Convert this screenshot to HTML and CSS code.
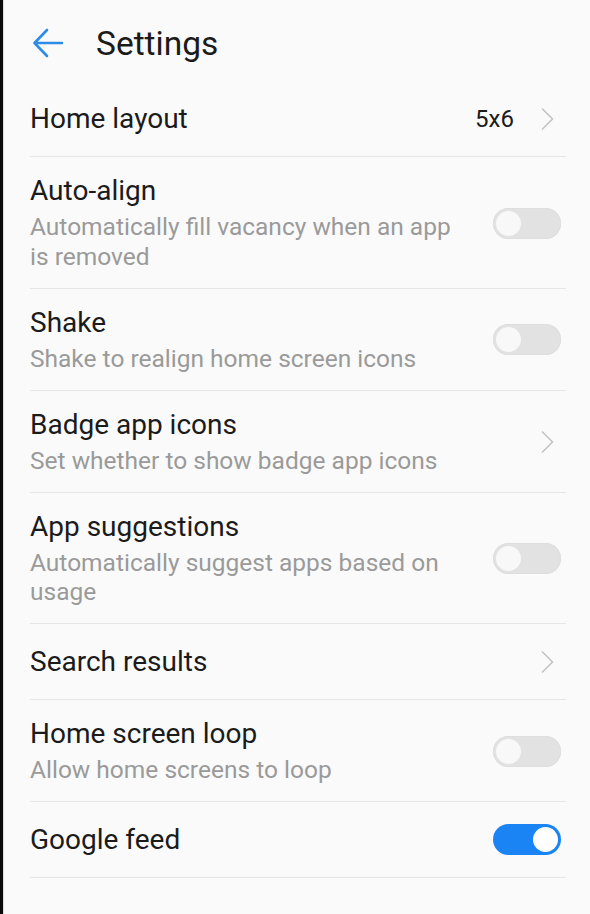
FILE: index.html
```html
<!DOCTYPE html>
<html>
<head>
<meta charset="utf-8">
<link rel="stylesheet" href="styles.css">
</head>
<body>
<div class="screen">
  <header class="header">
    <svg class="back" width="32" height="30" viewBox="0 0 32 30"><path d="M30 15H3M15 2L2.5 15L15 28" fill="none" stroke="#2d8de6" stroke-width="2.6" stroke-linecap="round" stroke-linejoin="round"/></svg>
    <h1 class="title">Settings</h1>
  </header>
  <ul class="list">
    <li class="row single">
      <div class="text"><div class="label">Home layout</div></div>
      <span class="value">5x6</span>
      <svg class="chev" width="14" height="24" viewBox="0 0 14 24"><path d="M2 1.5L12.5 12L2 22.5" fill="none" stroke="#c4c4c4" stroke-width="1.6"/></svg>
    </li>
    <li class="row">
      <div class="text"><div class="label">Auto-align</div><div class="sub">Automatically fill vacancy when an app is removed</div></div>
      <span class="toggle"></span>
    </li>
    <li class="row">
      <div class="text"><div class="label">Shake</div><div class="sub">Shake to realign home screen icons</div></div>
      <span class="toggle"></span>
    </li>
    <li class="row">
      <div class="text"><div class="label">Badge app icons</div><div class="sub">Set whether to show badge app icons</div></div>
      <svg class="chev" width="14" height="24" viewBox="0 0 14 24"><path d="M2 1.5L12.5 12L2 22.5" fill="none" stroke="#c4c4c4" stroke-width="1.6"/></svg>
    </li>
    <li class="row">
      <div class="text"><div class="label">App suggestions</div><div class="sub">Automatically suggest apps based on usage</div></div>
      <span class="toggle"></span>
    </li>
    <li class="row single">
      <div class="text"><div class="label">Search results</div></div>
      <svg class="chev" width="14" height="24" viewBox="0 0 14 24"><path d="M2 1.5L12.5 12L2 22.5" fill="none" stroke="#c4c4c4" stroke-width="1.6"/></svg>
    </li>
    <li class="row">
      <div class="text"><div class="label">Home screen loop</div><div class="sub">Allow home screens to loop</div></div>
      <span class="toggle"></span>
    </li>
    <li class="row single">
      <div class="text"><div class="label">Google feed</div></div>
      <span class="toggle on"></span>
    </li>
  </ul>
</div>
</body>
</html>
```
FILE: styles.css
```css
html, body {
  margin: 0;
  padding: 0;
  background: #fafafa;
}
body {
  font-family: Roboto, "Noto Sans", sans-serif;
  color: #1b1b1b;
}
.screen {
  box-sizing: border-box;
  width: 590px;
  height: 914px;
  border-left: 3px solid #0a0a0a;
  box-shadow: inset 1px 0 0 #dcdcdc;
  padding-left: 27px;
  padding-right: 24px;
  overflow: hidden;
}
.header {
  height: 81px;
  display: flex;
  align-items: center;
  padding-top: 6px;
  box-sizing: border-box;
}
.back {
  margin-left: 2px;
  margin-top: -2px;
  flex: none;
}
.title {
  margin: 0 0 0 32px;
  font-size: 33.5px;
  font-weight: 400;
  line-height: 40px;
  color: #1b1b1b;
}
.list {
  list-style: none;
  margin: 0;
  padding: 0;
}
.row {
  display: flex;
  align-items: center;
  border-bottom: 1px solid #e6e6e6;
  padding: 18px 5px 16.5px 0;
}
.row.single {
  padding: 0 5px 0 0;
  height: 75px;
}
.text {
  flex: 1;
  min-width: 0;
}
.label {
  font-size: 28px;
  line-height: 32px;
  color: #1b1b1b;
}
.sub {
  font-size: 24.5px;
  line-height: 29.5px;
  color: #9a9a9a;
  margin-top: 5px;
  max-width: 440px;
}
.value {
  font-size: 24px;
  color: #1b1b1b;
  margin-right: 26px;
}
.chev {
  flex: none;
  margin-right: 7px;
}
.toggle {
  flex: none;
  position: relative;
  width: 68px;
  height: 31px;
  border-radius: 16px;
  background: #e2e2e2;
  box-shadow: inset 0 0 0 1px #dedede;
}
.toggle::after {
  content: "";
  position: absolute;
  left: 3px;
  top: 3px;
  width: 25px;
  height: 25px;
  border-radius: 50%;
  background: #f8f8f8;
}
.toggle.on {
  background: #1a84f4;
  box-shadow: none;
}
.toggle.on::after {
  left: auto;
  right: 3px;
  background: #ffffff;
}
```
